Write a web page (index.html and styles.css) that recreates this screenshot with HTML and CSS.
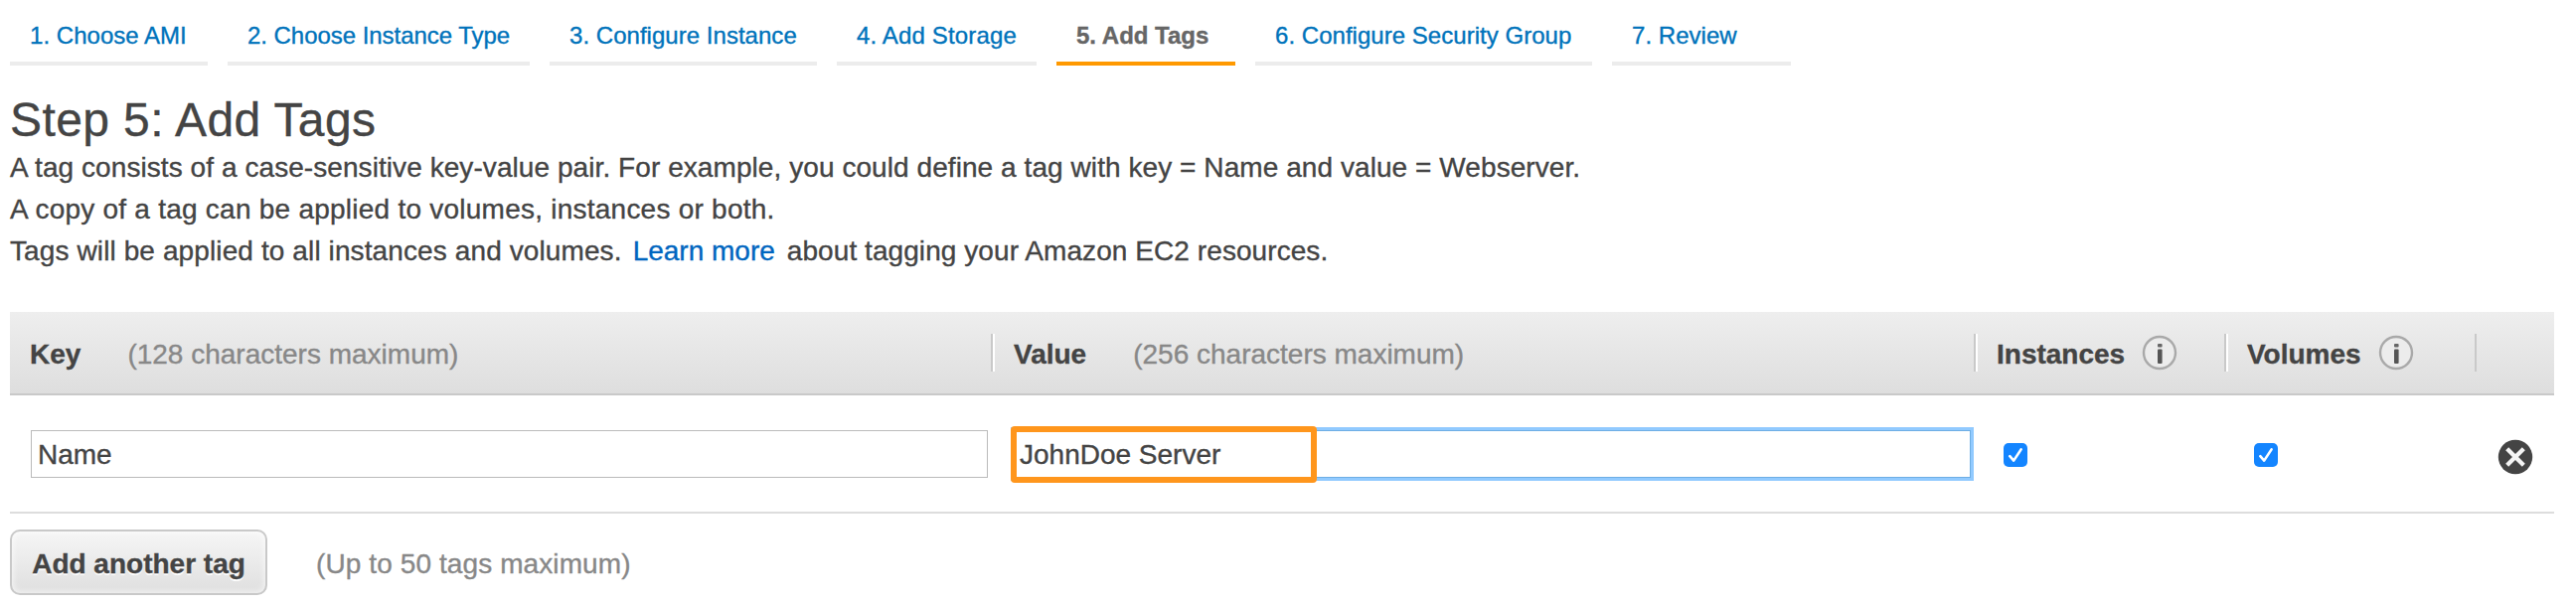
FILE: index.html
```html
<!DOCTYPE html>
<html lang="en">
<head>
<meta charset="utf-8">
<title>Step 5: Add Tags</title>
<link rel="stylesheet" href="styles.css">
</head>
<body>
<nav class="steps">
  <a class="step">1. Choose AMI</a>
  <a class="step">2. Choose Instance Type</a>
  <a class="step">3. Configure Instance</a>
  <a class="step">4. Add Storage</a>
  <a class="step current">5. Add Tags</a>
  <a class="step">6. Configure Security Group</a>
  <a class="step">7. Review</a>
</nav>
<main class="page">
  <h1 class="title">Step 5: Add Tags</h1>
  <div class="intro">
    <p class="line">A tag consists of a case-sensitive key-value pair. For example, you could define a tag with key = Name and value = Webserver.</p>
    <p class="line wide">A copy of a tag can be applied to volumes, instances or both.</p>
    <p class="line"><span class="lead">Tags will be applied to all instances and volumes.</span><a class="link">Learn more</a><span>about tagging your Amazon EC2 resources.</span></p>
  </div>
  <section class="table">
    <div class="grid head">
      <div class="th">Key<span class="hint">(128 characters maximum)</span></div>
      <div class="th ruled">Value<span class="hint">(256 characters maximum)</span></div>
      <div class="th ruled">Instances
        <svg class="info" viewBox="0 0 36 36"><circle cx="18" cy="18" r="16" fill="#ececec" stroke="#a9a9a9" stroke-width="2.4"/><rect x="16" y="9" width="4.6" height="3.6" rx="1" fill="#666"/><rect x="16" y="14.5" width="4.6" height="14.5" rx="1" fill="#555"/></svg>
      </div>
      <div class="th ruled">Volumes
        <svg class="info" viewBox="0 0 36 36"><circle cx="18" cy="18" r="16" fill="#ececec" stroke="#a9a9a9" stroke-width="2.4"/><rect x="16" y="9" width="4.6" height="3.6" rx="1" fill="#666"/><rect x="16" y="14.5" width="4.6" height="14.5" rx="1" fill="#555"/></svg>
      </div>
      <div class="th ruled last"></div>
    </div>
    <div class="grid row">
      <div class="cell key"><div class="field">Name</div></div>
      <div class="cell value"><div class="field focused">JohnDoe Server<span class="marker"></span></div></div>
      <div class="cell check">
        <svg class="box" viewBox="0 0 24 24"><rect width="24" height="24" rx="5" fill="#1485ff"/><path d="M6.3 13.2 10.2 17.6 17.6 6.4" fill="none" stroke="#fff" stroke-width="2.6" stroke-linecap="round" stroke-linejoin="round"/></svg>
      </div>
      <div class="cell check">
        <svg class="box" viewBox="0 0 24 24"><rect width="24" height="24" rx="5" fill="#1485ff"/><path d="M6.3 13.2 10.2 17.6 17.6 6.4" fill="none" stroke="#fff" stroke-width="2.6" stroke-linecap="round" stroke-linejoin="round"/></svg>
      </div>
      <div class="cell remove">
        <svg class="cross" viewBox="0 0 36 36"><circle cx="18" cy="18" r="17.2" fill="#444"/><path d="M11.2 11.2 24.8 24.8M24.8 11.2 11.2 24.8" stroke="#f4f4f4" stroke-width="4.3" stroke-linecap="square"/></svg>
      </div>
    </div>
  </section>
  <div class="actions">
    <button class="add">Add another tag</button>
    <span class="limit">(Up to 50 tags maximum)</span>
  </div>
</main>
</body>
</html>
```
FILE: styles.css
```css
* {
  box-sizing: border-box;
}

body {
  margin: 0;
  background: #fff;
  color: #444;
  font-family: "Liberation Sans", Arial, sans-serif;
  font-size: 28px;
  -webkit-text-stroke: 0.35px currentColor;
}

.steps {
  display: flex;
  gap: 20px;
  padding-left: 10px;
}

.step {
  min-width: 180px;
  height: 66px;
  padding: 22px 20px 13px;
  border-bottom: 4px solid #ececec;
  color: #0073bb;
  font-size: 24px;
  line-height: 27px;
  letter-spacing: 0.03px;
  white-space: nowrap;
}

.step:nth-child(1) { width: 199px; }
.step:nth-child(2) { width: 304px; letter-spacing: -0.04px; }
.step:nth-child(3) { width: 269px; }
.step:nth-child(4) { width: 201px; letter-spacing: 0.15px; }
.step:nth-child(6) { width: 339px; }

.step.current {
  border-bottom-color: #ff9900;
  color: #666;
  font-weight: bold;
  letter-spacing: 0;
}

.page {
  padding: 0 22px 0 10px;
}

.title {
  margin: 28px 0 0;
  font-size: 48px;
  font-weight: normal;
  line-height: 54px;
  letter-spacing: 0.4px;
}

.line {
  margin: 0;
  line-height: 42px;
  letter-spacing: 0.07px;
}

.line.wide {
  letter-spacing: 0.24px;
}

.lead {
  letter-spacing: 0.11px;
}

.link {
  margin: 0 12px 0 11px;
  color: #0066c0;
  letter-spacing: 0;
}

.table {
  margin-top: 40px;
}

.grid {
  display: grid;
  grid-template-columns: 987px 989px 252px 252px 1fr;
}

.head {
  height: 84px;
  padding-top: 22px;
  border-bottom: 2px solid #c9c9c9;
  background: linear-gradient(#eee, #dedede);
}

.th {
  display: flex;
  height: 38px;
  padding: 3px 0 0 20px;
  align-items: center;
  font-weight: bold;
}

.th.ruled {
  padding-left: 21px;
  border-left: 2px solid #c9c9c9;
  box-shadow: inset 2px 0 #fff;
}

.th.last {
  box-shadow: none;
}

.hint {
  margin-left: 47px;
  color: #888;
  font-weight: normal;
}

.info {
  width: 36px;
  height: 36px;
  margin: -3px 0 0 17px;
}

.row {
  height: 119px;
  padding-top: 35px;
  border-bottom: 2px solid #ddd;
}

.key {
  padding: 0 3px 0 21px;
}

.value {
  padding: 0 3px 0 23px;
}

.field {
  position: relative;
  height: 48px;
  padding: 2px 6px 0;
  border: 1px solid #bbb;
  line-height: 44px;
}

.focused {
  padding-left: 5px;
  border-color: #6eaee4;
  box-shadow: 0 0 0 3px #91caff;
}

/* highlight frame over the typed value */
.marker {
  position: absolute;
  top: -5px;
  left: -4px;
  width: 308px;
  height: 57px;
  border: 6px solid #ff961c;
  border-radius: 4px;
}

.check {
  padding: 13px 0 0 30px;
}

.box {
  display: block;
  width: 24px;
  height: 24px;
}

.remove {
  padding: 9px 0 0 23px;
}

.cross {
  display: block;
  width: 36px;
  height: 36px;
}

.actions {
  display: flex;
  margin-top: 16px;
  align-items: center;
}

.add {
  width: 259px;
  height: 66px;
  padding: 3px 0 0;
  border: 2px solid #c9c9c9;
  border-radius: 10px;
  background: linear-gradient(#f6f6f6, #dfdfdf);
  box-shadow: inset 0 0 6px 1px rgba(255, 255, 255, 0.7);
  color: #444;
  font: bold 28px "Liberation Sans", Arial, sans-serif;
  text-shadow: 0 2px #fff;
}

.limit {
  padding-top: 3px;
  margin-left: 49px;
  color: #888;
  letter-spacing: 0.1px;
}
```
